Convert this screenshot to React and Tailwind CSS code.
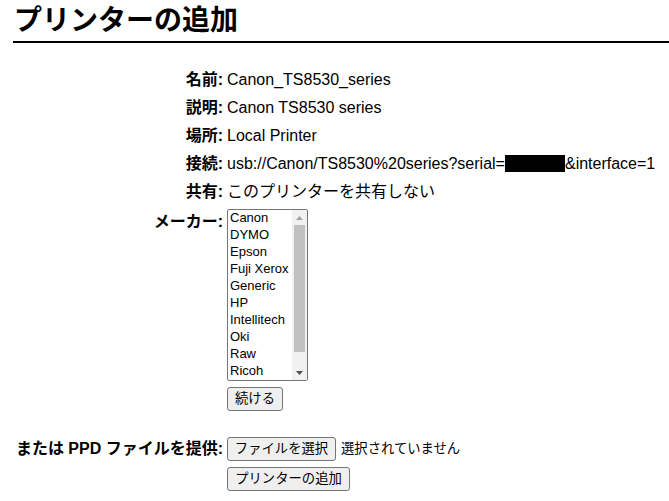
import React from "react";

const FONT = { fontFamily: '"Liberation Sans", "Noto Sans CJK JP", sans-serif' };

const makers = ["Canon", "DYMO", "Epson", "Fuji Xerox", "Generic", "HP", "Intellitech", "Oki", "Raw", "Ricoh"];

function Btn({ children, w }) {
  return (
    <button
      type="button"
      className={`${w} h-[24px] bg-[#efefef] border border-[#767676] rounded-[3px] text-[13.33px] leading-[20px] text-black flex items-center justify-center`}
    >
      {children}
    </button>
  );
}

function Label({ children, lh = "leading-[28px]" }) {
  return <div className={`text-right font-bold text-[16px] ${lh} whitespace-nowrap`}>{children}</div>;
}

function Value({ children }) {
  return <div className="text-[16px] leading-[28px] whitespace-nowrap">{children}</div>;
}

export default function App() {
  return (
    <div className="min-h-[501px] w-[669px] bg-white text-black overflow-hidden" style={FONT}>
      <h2 className="ml-[13px] h-[43px] border-b-2 border-black pl-[1px] text-[28px] font-bold leading-[42px] whitespace-nowrap">
        プリンターの追加
      </h2>
      <div className="mt-[23px] ml-[13px] grid grid-cols-[210px_1fr] gap-x-[4px]">
        <Label>名前:</Label>
        <Value>Canon_TS8530_series</Value>
        <Label>説明:</Label>
        <Value>Canon TS8530 series</Value>
        <Label>場所:</Label>
        <Value>Local Printer</Value>
        <Label>接続:</Label>
        <Value>
          usb://Canon/TS8530%20series?serial=
          <span className="inline-block w-[60px] h-[17px] bg-black align-[-3px]"></span>
          &amp;interface=1
        </Value>
        <Label>共有:</Label>
        <Value>このプリンターを共有しない</Value>

        <div className="mt-[2px]">
          <Label>メーカー:</Label>
        </div>
        <div className="mt-[3px] flex flex-col items-start">
          <div className="w-[81px] h-[172px] border border-[#767676] rounded-[2px] bg-white flex overflow-hidden">
            <div className="flex-1 flex flex-col pl-[2px] -mt-[1px]">
              {makers.map((m) => (
                <div key={m} className="h-[17px] text-[13px] leading-[17px] whitespace-nowrap">
                  {m}
                </div>
              ))}
            </div>
            <div className="w-[15px] h-full bg-[#f1f1f1] flex flex-col items-center">
              <div className="h-[15px] flex items-center justify-center">
                <svg width="7" height="4" viewBox="0 0 7 4">
                  <polygon points="0,4 7,4 3.5,0" fill="#a3a3a3" />
                </svg>
              </div>
              <div className="w-[11px] h-[127px] bg-[#c1c1c1]"></div>
              <div className="flex-1"></div>
              <div className="h-[15px] flex items-center justify-center">
                <svg width="7" height="4" viewBox="0 0 7 4">
                  <polygon points="0,0 7,0 3.5,4" fill="#505050" />
                </svg>
              </div>
            </div>
          </div>
          <div className="mt-[6px]">
            <Btn w="w-[56px]">続ける</Btn>
          </div>
        </div>

        <div className="mt-[26px]">
          <Label lh="leading-[24px]">または PPD ファイルを提供:</Label>
        </div>
        <div className="mt-[26px] flex flex-col items-start">
          <div className="flex items-center gap-[5px]">
            <Btn w="w-[109px]">ファイルを選択</Btn>
            <span className="text-[13.33px] whitespace-nowrap">選択されていません</span>
          </div>
          <div className="mt-[6px]">
            <Btn w="w-[123px]">プリンターの追加</Btn>
          </div>
        </div>
      </div>
    </div>
  );
}
